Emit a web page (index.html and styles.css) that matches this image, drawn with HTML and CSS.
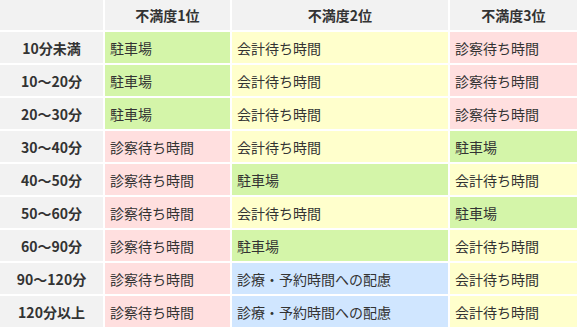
FILE: index.html
```html
<!DOCTYPE html>
<html lang="ja">
<head>
<meta charset="utf-8">
<link rel="stylesheet" href="styles.css">
</head>
<body>
<div class="grid">
  <div class="cell head"></div>
  <div class="cell head">不満度1位</div>
  <div class="cell head">不満度2位</div>
  <div class="cell head">不満度3位</div>

  <div class="cell rh">10分未満</div>
  <div class="cell g">駐車場</div>
  <div class="cell y">会計待ち時間</div>
  <div class="cell p">診察待ち時間</div>

  <div class="cell rh">10～20分</div>
  <div class="cell g">駐車場</div>
  <div class="cell y">会計待ち時間</div>
  <div class="cell p">診察待ち時間</div>

  <div class="cell rh">20～30分</div>
  <div class="cell g">駐車場</div>
  <div class="cell y">会計待ち時間</div>
  <div class="cell p">診察待ち時間</div>

  <div class="cell rh">30～40分</div>
  <div class="cell p">診察待ち時間</div>
  <div class="cell y">会計待ち時間</div>
  <div class="cell g">駐車場</div>

  <div class="cell rh">40～50分</div>
  <div class="cell p">診察待ち時間</div>
  <div class="cell g">駐車場</div>
  <div class="cell y">会計待ち時間</div>

  <div class="cell rh">50～60分</div>
  <div class="cell p">診察待ち時間</div>
  <div class="cell y">会計待ち時間</div>
  <div class="cell g">駐車場</div>

  <div class="cell rh">60～90分</div>
  <div class="cell p">診察待ち時間</div>
  <div class="cell g">駐車場</div>
  <div class="cell y">会計待ち時間</div>

  <div class="cell rh">90～120分</div>
  <div class="cell p">診察待ち時間</div>
  <div class="cell b">診療・予約時間への配慮</div>
  <div class="cell y">会計待ち時間</div>

  <div class="cell rh">120分以上</div>
  <div class="cell p">診察待ち時間</div>
  <div class="cell b">診療・予約時間への配慮</div>
  <div class="cell y">会計待ち時間</div>
</div>
</body>
</html>
```
FILE: styles.css
```css
html, body {
  margin: 0;
  padding: 0;
  background: #ffffff;
}
body {
  font-family: "Noto Sans CJK JP", "Noto Sans", sans-serif;
  font-size: 14px;
  color: #333333;
}
.grid {
  display: grid;
  grid-template-columns: 103px 125px 216px 1fr;
  grid-template-rows: 30px;
  grid-auto-rows: 31px;
  gap: 2px;
  width: 577px;
}
.cell {
  display: flex;
  align-items: center;
  padding: 0 5px;
  white-space: nowrap;
  line-height: 1;
}
.head {
  background: #f2f2f2;
  font-weight: bold;
  justify-content: center;
}
.rh {
  background: #f2f2f2;
  font-weight: bold;
  justify-content: center;
}
.g { background: #d4f5a9; }
.y { background: #ffffcc; }
.p { background: #ffdfdf; }
.b { background: #d0e6ff; }
```
